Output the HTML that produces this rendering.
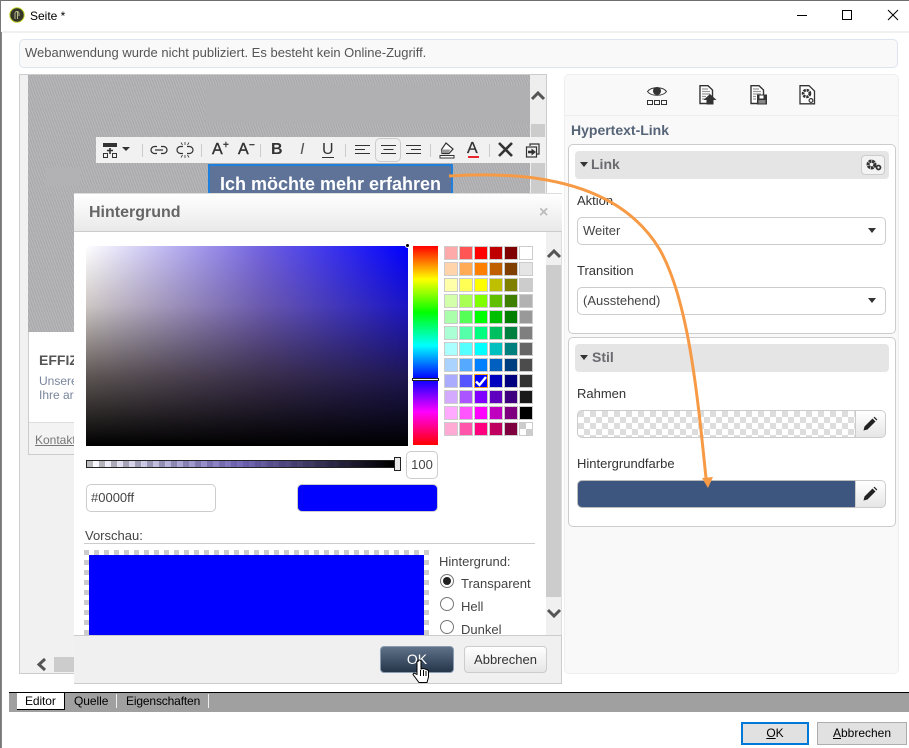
<!DOCTYPE html>
<html lang="de">
<head>
<meta charset="utf-8">
<title>Seite</title>
<style>
html,body{margin:0;padding:0;width:909px;height:748px;overflow:hidden;background:#fff}
body{position:relative;font-family:"Liberation Sans",Arial,sans-serif;font-size:13px;color:#444}
div,span,svg{position:absolute;box-sizing:border-box}
.t{white-space:nowrap;line-height:16px}
.sep{top:144px;width:1px;height:13px;background:#ccc}
.tb{font-weight:bold;color:#333;text-align:center;white-space:nowrap;line-height:18px}
.sel{left:577px;width:309px;height:28px;background:#fff;border:1px solid #ccc;border-radius:5px}
.car{width:0;height:0;border-left:4px solid transparent;border-right:4px solid transparent;border-top:5px solid #333}
.chk{background:repeating-conic-gradient(from 90deg,#ddd 0 25%,#fff 0 50%) 0 0/12px 12px}
.grp{left:568px;width:328px;background:#fff;border:1px solid #ccc;border-radius:5px}
.hd{left:575px;width:314px;height:28px;background:#e5e5e5;border-radius:4px}
.pb{left:855px;width:31px;height:28px;background:linear-gradient(#fff,#e6e6e6);border:1px solid #ccc;border-radius:0 5px 5px 0}
.sw{display:grid;grid-template-columns:repeat(6,14px);grid-auto-rows:14px;column-gap:1px;row-gap:2px;left:444px;top:246px}
.sw i{display:block;border:1px solid #ccc;position:relative;box-sizing:border-box}
.rd{width:14px;height:14px;border-radius:50%;border:1px solid #777;background:#fff;left:440px}
</style>
</head>
<body>
<!-- window chrome -->
<div style="left:0;top:0;width:909px;height:1px;background:#6e6e6e"></div>
<div style="left:0;top:0;width:1px;height:748px;background:#777"></div>
<div style="left:1px;top:32px;width:1px;height:716px;background:#888"></div>
<div style="left:2px;top:31px;width:907px;height:2px;background:#f0f0f0"></div>
<svg style="left:9px;top:7px" width="16" height="16" viewBox="0 0 16 16"><circle cx="8" cy="8" r="7.2" fill="#33352a" stroke="#c4d428" stroke-width="1"/><path d="M6 12V6.500a2 2 0 0 1 4 0V9M8.500 4v8" stroke="#b9b98a" stroke-width="1" fill="none"/></svg>
<div class="t" style="left:30px;top:8px;font-size:12px;color:#000">Seite *</div>
<svg style="left:790px;top:5px" width="115" height="20" viewBox="0 0 115 20"><path d="M7 10.500H17" stroke="#000" fill="none"/><rect x="52.500" y="5.500" width="9" height="9" stroke="#000" fill="none"/><path d="M98 5L108 15M108 5L98 15" stroke="#000" fill="none"/></svg>

<!-- notice -->
<div style="left:19px;top:39px;width:879px;height:29px;background:#f9f9f9;border:1px solid #dce4ef;border-radius:5px"></div>
<div class="t" style="left:25px;top:45px;font-size:13px;color:#555">Webanwendung wurde nicht publiziert. Es besteht kein Online-Zugriff.</div>

<!-- editor panel -->
<div style="left:19px;top:74px;width:528px;height:600px;background:#f1f1f1;border:1px solid #ccc"></div>
<div style="left:28px;top:75px;width:502px;height:257px;background-color:#aeaeb0;background-image:repeating-linear-gradient(70deg,#a8a8aa 0 1px,#b6b6b8 1px 2.500px)"></div>
<div style="left:205px;top:85px;width:325px;height:39px;background:#b0b0b2"></div>
<div style="left:45px;top:168px;width:35px;height:18px;background:#b2b2b4"></div>
<div style="left:530px;top:75px;width:16px;height:125px;background:#eee"></div>
<div style="left:531px;top:124px;width:14px;height:76px;background:#ccc"></div>
<svg style="left:530px;top:90px" width="16" height="12" viewBox="0 0 16 12"><path d="M2 9L8 3L14 9" stroke="#555" stroke-width="3" fill="none"/></svg>
<div style="left:29px;top:332px;width:46px;height:123px;background:#fff;border-bottom:1px solid #ccc"></div>
<div style="left:28px;top:332px;width:1px;height:123px;background:#ccc"></div>
<div style="left:29px;top:422px;width:46px;height:1px;background:#ddd"></div>
<div style="left:29px;top:423px;width:46px;height:31px;background:#f3f3f3"></div>
<div class="t" style="left:39px;top:352px;width:35px;overflow:hidden;font-weight:bold;font-size:14px;color:#555">EFFIZIENZ</div>
<div class="t" style="left:39px;top:373px;width:35px;overflow:hidden;font-size:12px;color:#78859c">Unsere</div>
<div class="t" style="left:39px;top:387px;width:35px;overflow:hidden;font-size:12px;color:#78859c">Ihre ar</div>
<div class="t" style="left:35px;top:432px;width:39px;overflow:hidden;font-size:12px;color:#777;text-decoration:underline">Kontakt</div>
<svg style="left:35px;top:657px" width="14" height="15" viewBox="0 0 14 15"><path d="M10 2L4 7.500L10 13" stroke="#555" stroke-width="3" fill="none"/></svg>
<div style="left:54px;top:657px;width:21px;height:15px;background:#ccc"></div>

<!-- button being edited -->
<div style="left:208px;top:164px;width:245px;height:32px;background:#5f7399;border:2px solid #1f80dc;border-bottom:0"></div>
<div class="t" style="left:208px;top:174px;width:245px;text-align:center;font-weight:bold;font-size:18px;color:#fff;line-height:20px">Ich möchte mehr erfahren</div>

<!-- toolbar -->
<div style="left:96px;top:137px;width:450px;height:26px;background:#f1f1f1"></div>
<svg style="left:102px;top:142px" width="32" height="18" viewBox="0 0 32 18"><rect x="1" y="1" width="14" height="4" fill="#333"/><path d="M8 6v6M5 8.500h6" stroke="#333" stroke-width="1.600"/><rect x="1.500" y="11.500" width="4" height="4" fill="none" stroke="#333"/><rect x="10.500" y="11.500" width="4" height="4" fill="none" stroke="#333"/><path d="M20 5h8l-4 4z" fill="#333"/></svg>
<div class="sep" style="left:142px"></div>
<svg style="left:150px;top:143px" width="18" height="14" viewBox="0 0 18 14"><path d="M7 3.500H4.500a3.500 3.500 0 0 0 0 7H7M11 3.500h2.500a3.500 3.500 0 0 1 0 7H11M5 7h8" fill="none" stroke="#333" stroke-width="1.300"/></svg>
<svg style="left:176px;top:141px" width="18" height="18" viewBox="0 0 18 18"><path d="M7 5.500H4.500a3.500 3.500 0 0 0 0 7H7M11 5.500h2.500a3.500 3.500 0 0 1 0 7H11" fill="none" stroke="#333" stroke-width="1.200"/><path d="M9 1v3M5 1.500l1.500 2.500M13 1.500L11.500 4M9 14v3M5 16.500l1.500-2.500M13 16.500L11.500 14" stroke="#333" stroke-width=".8"/></svg>
<div class="sep" style="left:201px"></div>
<div class="tb" style="left:212px;top:141px;font-size:16px;font-weight:normal;-webkit-text-stroke:.4px #333">A<span style="position:absolute;left:11px;top:-4px;font-size:10px">+</span></div>
<div class="tb" style="left:238px;top:141px;font-size:16px;font-weight:normal;-webkit-text-stroke:.4px #333">A<span style="position:absolute;left:11px;top:-4px;font-size:10px">−</span></div>
<div class="sep" style="left:260px"></div>
<div class="tb" style="left:271px;top:141px;font-size:16px">B</div>
<div class="tb" style="left:300px;top:141px;font-size:16px;font-weight:normal;font-style:italic;color:#555">I</div>
<div class="tb" style="left:322px;top:141px;font-size:16px;font-weight:normal">U</div>
<div style="left:322px;top:157px;width:12px;height:1px;background:#333"></div>
<div class="sep" style="left:345px"></div>
<div style="left:375px;top:138px;width:26px;height:24px;border:1px solid #ccc;border-radius:5px"></div>
<svg style="left:354px;top:143px" width="68" height="14" viewBox="0 0 68 14"><path d="M1 2.500h15M1 6.500h10M1 10.500h15M27 2.500h15M29.500 6.500h10M27 10.500h15M52 2.500h15M57 6.500h10M52 10.500h15" stroke="#333" stroke-width="1" fill="none"/></svg>
<div class="sep" style="left:430px"></div>
<svg style="left:439px;top:142px" width="16" height="17" viewBox="0 0 16 17"><path d="M7 1L14 7L10 11.500H3L2.500 7.500z" fill="#fff" stroke="#333" stroke-width="1.200"/><path d="M2.500 7.500h9L9.500 11H3z" fill="#999"/><path d="M1 13.500h14v2.500H1z" fill="#fff" stroke="#333" stroke-width="1"/></svg>
<div class="tb" style="left:467px;top:140px;font-size:16px;font-weight:normal;color:#333;-webkit-text-stroke:.3px #333">A</div>
<div style="left:468px;top:156px;width:11px;height:2px;background:#e8262c"></div>
<div class="sep" style="left:489px"></div>
<svg style="left:497px;top:141px" width="17" height="17" viewBox="0 0 17 17"><path d="M2 2L15 15M15 2L2 15" stroke="#333" stroke-width="2.600" fill="none"/></svg>
<svg style="left:525px;top:143px" width="16" height="15" viewBox="0 0 16 15"><path d="M5 3V1h9v10h-3" fill="none" stroke="#333" stroke-width="1.200"/><rect x="1.500" y="4" width="10" height="10" fill="#f1f1f1" stroke="#333" stroke-width="1.200"/><path d="M3 7.800h3.500V5.500L11 9l-4.500 3.500v-2.300H3z" fill="#333"/></svg>

<!-- right panel -->
<div style="left:564px;top:74px;width:335px;height:600px;background:#f9f9f9;border:1px solid #eee;border-radius:5px"></div>
<div style="left:565px;top:115px;width:333px;height:1px;background:#eee"></div>
<svg style="left:646px;top:84px" width="22" height="22" viewBox="0 0 22 22"><path d="M1.500 7.500C5 2.500 17 2.500 20.500 7.500C17 12.500 5 12.500 1.500 7.500Z" fill="none" stroke="#333"/><circle cx="11" cy="7" r="4" fill="#333"/><rect x="1.500" y="16.500" width="5" height="4" fill="none" stroke="#333"/><rect x="8.500" y="16.500" width="5" height="4" fill="none" stroke="#333"/><rect x="15.500" y="16.500" width="5" height="4" fill="none" stroke="#333"/></svg>
<svg style="left:699px;top:85px" width="18" height="21" viewBox="0 0 18 21"><path d="M1 .700H9L13.500 5V18.500H1Z" fill="#fff" stroke="#333" stroke-width="1.400"/><path d="M3 4h6M3 6.500h8M3 9h8M3 11.500h4M3 14h3" stroke="#999" stroke-width="1.300"/><path d="M11 9l6.500 6H14.500v4.500H7.500V15H4.500z" fill="#333"/></svg>
<svg style="left:750px;top:85px" width="18" height="21" viewBox="0 0 18 21"><path d="M1 .700H9L13.500 5V18.500H1Z" fill="#fff" stroke="#333" stroke-width="1.400"/><path d="M3 4h6M3 6.500h8M3 9h8M3 11.500h3M3 14h3" stroke="#999" stroke-width="1.300"/><path d="M7 9.500h10v10H7z" fill="#333"/><rect x="9.500" y="10.500" width="4" height="3" fill="#fff"/><rect x="8.500" y="15" width="7" height="3.500" fill="#888"/></svg>
<svg style="left:799px;top:85px" width="17" height="20" viewBox="0 0 17 20"><path d="M1 .700H10L15.500 6V18.800H1Z" fill="#fff" stroke="#333" stroke-width="1.300"/><circle cx="7.500" cy="8.500" r="3.400" fill="none" stroke="#333" stroke-width="2.800" stroke-dasharray="2.400 .8"/><circle cx="12" cy="15.500" r="1.900" fill="#fff" stroke="#333" stroke-width="1.200"/></svg>
<div class="t" style="left:571px;top:122px;font-weight:bold;font-size:14px;color:#566478">Hypertext-Link</div>

<div class="grp" style="top:144px;height:190px"></div>
<div class="hd" style="top:151px"></div>
<div class="car" style="left:580px;top:162px"></div>
<div class="t" style="left:591px;top:156px;font-weight:bold;font-size:14px;color:#6a6a70">Link</div>
<div style="left:861px;top:155px;width:24px;height:20px;background:#f3f3f3;border:1px solid #ccc;border-radius:4px"></div>
<svg style="left:865px;top:158px" width="17" height="14" viewBox="0 0 17 14"><circle cx="6.500" cy="6.500" r="3.400" fill="none" stroke="#333" stroke-width="3.200" stroke-dasharray="2.700 .6"/><circle cx="13.500" cy="9.500" r="2" fill="none" stroke="#333" stroke-width="1.700"/></svg>
<div class="t" style="left:577px;top:193px;color:#333">Aktion</div>
<div class="sel" style="top:217px"></div>
<div class="t" style="left:583px;top:223px;color:#444">Weiter</div>
<div class="car" style="left:868px;top:228px"></div>
<div class="t" style="left:577px;top:263px;color:#333">Transition</div>
<div class="sel" style="top:287px"></div>
<div class="t" style="left:583px;top:293px;color:#444">(Ausstehend)</div>
<div class="car" style="left:868px;top:298px"></div>

<div class="grp" style="top:337px;height:190px"></div>
<div class="hd" style="top:344px"></div>
<div class="car" style="left:580px;top:355px"></div>
<div class="t" style="left:592px;top:349px;font-weight:bold;font-size:14px;color:#6a6a70">Stil</div>
<div class="t" style="left:577px;top:386px;color:#333">Rahmen</div>
<div class="chk" style="left:577px;top:410px;width:279px;height:28px;border:1px solid #ccc;border-radius:5px 0 0 5px"></div>
<div class="pb" style="top:410px"></div>
<svg style="left:862px;top:416px" width="16" height="16" viewBox="0 0 16 16"><path d="M1.500 14.500L2.500 10.500L10.500 2.500L13.500 5.500L5.500 13.500Z" fill="#222"/><path d="M11.500 1.500L12.500.7L15.300 3.500L14.500 4.500Z" fill="#222"/></svg>
<div class="t" style="left:577px;top:456px;color:#333">Hintergrundfarbe</div>
<div style="left:577px;top:480px;width:279px;height:28px;background:#3d5680;border:1px solid #bbb;border-radius:5px 0 0 5px"></div>
<div class="pb" style="top:480px"></div>
<svg style="left:862px;top:486px" width="16" height="16" viewBox="0 0 16 16"><path d="M1.500 14.500L2.500 10.500L10.500 2.500L13.500 5.500L5.500 13.500Z" fill="#222"/><path d="M11.500 1.500L12.500.7L15.300 3.500L14.500 4.500Z" fill="#222"/></svg>

<!-- tab bar -->
<div style="left:9px;top:692px;width:900px;height:20px;background:#a0a0a0;border-top:1px solid #000"></div>
<div style="left:17px;top:693px;width:48px;height:17px;background:#fff;border-right:1px solid #000;border-bottom:1px solid #000"></div>
<div class="t" style="left:25px;top:693px;font-size:12px;color:#000;letter-spacing:-.1px">Editor</div>
<div class="t" style="left:74px;top:693px;font-size:12px;color:#000;letter-spacing:-.05px">Quelle</div>
<div style="left:116px;top:694px;width:1px;height:14px;background:#eee"></div>
<div class="t" style="left:126px;top:693px;font-size:12px;color:#000;letter-spacing:-.15px">Eigenschaften</div>
<div style="left:208px;top:694px;width:1px;height:14px;background:#eee"></div>

<!-- bottom buttons -->
<div class="t" style="left:741px;top:722px;width:68px;height:23px;background:#e1e1e1;border:2px solid #0078d7;text-align:center;font-size:12px;color:#000;line-height:19px"><u>O</u>K</div>
<div class="t" style="left:817px;top:722px;width:90px;height:23px;background:#e1e1e1;border:1px solid #adadad;text-align:center;font-size:12px;color:#000;line-height:21px"><u>A</u>bbrechen</div>

<!-- dialog -->
<div style="left:74px;top:193px;width:488px;height:490px;background:#fff;border-top:1px solid #ddd"></div>
<div style="left:74px;top:194px;width:488px;height:38px;background:linear-gradient(#fff,#e9e9e9);border-bottom:1px solid #ccc"></div>
<div class="t" style="left:89px;top:205px;font-weight:bold;font-size:16px;color:#666">Hintergrund</div>
<div class="t" style="left:539px;top:205px;font-weight:bold;font-size:16px;color:#bbb">×</div>

<div style="left:86px;top:246px;width:322px;height:200px;background:linear-gradient(to top,#000,rgba(40,30,26,.75) 35%,rgba(90,70,60,.3) 70%,rgba(0,0,0,0)),linear-gradient(to right,#fff,#7060e0 55%,#00f)"></div>
<div style="left:405px;top:243px;width:5px;height:5px;background:#000;border-radius:50%;border:1px solid #fff"></div>
<div style="left:413px;top:246px;width:25px;height:199px;background:linear-gradient(#f00,#ff0 16.670%,#0f0 33.330%,#0ff 50%,#00f 66.670%,#f0f 83.330%,#f00)"></div>
<div style="left:412px;top:378px;width:27px;height:3px;background:#fff;border:1px solid #222"></div>

<div class="sw">
<i style="background:#faa"></i><i style="background:#f55"></i><i style="background:#f00"></i><i style="background:#bf0000"></i><i style="background:#7f0000"></i><i style="background:#fff"></i>
<i style="background:#ffd4aa"></i><i style="background:#fa5"></i><i style="background:#ff7f00"></i><i style="background:#bf5f00"></i><i style="background:#7f3f00"></i><i style="background:#e5e5e5"></i>
<i style="background:#ffa"></i><i style="background:#ff5"></i><i style="background:#ff0"></i><i style="background:#bfbf00"></i><i style="background:#7f7f00"></i><i style="background:#ccc"></i>
<i style="background:#d4ffaa"></i><i style="background:#af5"></i><i style="background:#7fff00"></i><i style="background:#5fbf00"></i><i style="background:#3f7f00"></i><i style="background:#b2b2b2"></i>
<i style="background:#afa"></i><i style="background:#5f5"></i><i style="background:#0f0"></i><i style="background:#00bf00"></i><i style="background:#007f00"></i><i style="background:#999"></i>
<i style="background:#aaffd4"></i><i style="background:#5fa"></i><i style="background:#00ff7f"></i><i style="background:#00bf5f"></i><i style="background:#007f3f"></i><i style="background:#7f7f7f"></i>
<i style="background:#aff"></i><i style="background:#5ff"></i><i style="background:#0ff"></i><i style="background:#00bfbf"></i><i style="background:#007f7f"></i><i style="background:#666"></i>
<i style="background:#aad4ff"></i><i style="background:#5af"></i><i style="background:#007fff"></i><i style="background:#005fbf"></i><i style="background:#003f7f"></i><i style="background:#4c4c4c"></i>
<i style="background:#aaf"></i><i style="background:#55f"></i><i style="background:#00f;border-color:#f5a623"></i><i style="background:#0000bf"></i><i style="background:#00007f"></i><i style="background:#333"></i>
<i style="background:#d4aaff"></i><i style="background:#a5f"></i><i style="background:#7f00ff"></i><i style="background:#5f00bf"></i><i style="background:#3f007f"></i><i style="background:#191919"></i>
<i style="background:#faf"></i><i style="background:#f5f"></i><i style="background:#f0f"></i><i style="background:#bf00bf"></i><i style="background:#7f007f"></i><i style="background:#000"></i>
<i style="background:#ffaad4"></i><i style="background:#f5a"></i><i style="background:#ff007f"></i><i style="background:#bf005f"></i><i style="background:#7f003f"></i><i style="background:linear-gradient(#ccc,#ccc) 0 0/6px 6px no-repeat,linear-gradient(#ccc,#ccc) 6px 6px/6px 6px no-repeat,#fff"></i>
</div>
<svg style="left:474px;top:374px" width="14" height="14" viewBox="0 0 14 14"><path d="M2 7.500L5.500 11L12 3" stroke="#fff" stroke-width="2.400" fill="none"/></svg>

<div style="left:86px;top:460px;width:312px;height:8px;border:1px solid #222;background:linear-gradient(to right,rgba(120,110,220,0),rgba(90,80,170,.85) 50%,#000 98%),repeating-conic-gradient(from 270deg,#bbb 0 25%,#fff 0 50%) 0 0/12px 12px"></div>
<div style="left:394px;top:457px;width:7px;height:14px;background:#e8e8e8;border:1px solid #222"></div>
<div class="t" style="left:406px;top:451px;width:32px;height:28px;border:1px solid #ccc;border-radius:5px;text-align:center;line-height:26px;font-size:13px;color:#444">100</div>
<div style="left:86px;top:484px;width:130px;height:28px;border:1px solid #ccc;border-radius:5px"></div>
<div class="t" style="left:91px;top:490px;font-size:13px;color:#444">#0000ff</div>
<div style="left:297px;top:484px;width:141px;height:28px;background:#00f;border:1px solid #ccc;border-radius:5px"></div>

<div class="t" style="left:85px;top:528px;font-size:13px;color:#444">Vorschau:</div>
<div style="left:84px;top:543px;width:451px;height:1px;background:#ccc"></div>
<div style="left:84px;top:550px;width:345px;height:85px;background:repeating-conic-gradient(from 270deg,#ccc 0 25%,#fff 0 50%) 0 0/10px 10px"></div>
<div style="left:89px;top:555px;width:335px;height:80px;background:#00f"></div>

<div class="t" style="left:439px;top:554px;font-size:13px;color:#444">Hintergrund:</div>
<div class="rd" style="top:574px"></div><div style="left:443px;top:577px;width:8px;height:8px;border-radius:50%;background:#222"></div>
<div class="t" style="left:461px;top:576px;font-size:13px;color:#444">Transparent</div>
<div class="rd" style="top:597px"></div>
<div class="t" style="left:461px;top:599px;font-size:13px;color:#444">Hell</div>
<div class="rd" style="top:620px"></div>
<div class="t" style="left:461px;top:622px;font-size:13px;color:#444;height:13px;overflow:hidden">Dunkel</div>

<div style="left:546px;top:232px;width:16px;height:403px;background:#f0f0f0;border-right:1px solid #ddd"></div>
<div style="left:546px;top:265px;width:15px;height:332px;background:#ccc"></div>
<svg style="left:546px;top:248px" width="16" height="12" viewBox="0 0 16 12"><path d="M2 9L8 3L14 9" stroke="#555" stroke-width="3" fill="none"/></svg>
<svg style="left:546px;top:607px" width="16" height="12" viewBox="0 0 16 12"><path d="M2 3L8 9L14 3" stroke="#555" stroke-width="3" fill="none"/></svg>

<div style="left:74px;top:635px;width:488px;height:49px;background:#f0f0f0;border-top:1px solid #ccc;border-bottom:1px solid #ccc;border-right:1px solid #ccc"></div>
<div class="t" style="left:380px;top:646px;width:74px;height:27px;background:linear-gradient(#5f7289,#25354a);border:1px solid #8a9bb0;border-radius:4px;text-align:center;color:#fff;line-height:25px;font-size:14px">OK</div>
<div class="t" style="left:464px;top:646px;width:83px;height:27px;background:linear-gradient(#fff,#e6e6e6);border:1px solid #ccc;border-radius:4px;text-align:center;color:#333;line-height:25px;font-size:13px">Abbrechen</div>
<svg style="left:412px;top:659px" width="20" height="26" viewBox="0 0 20 26"><path d="M6 2.500a1.500 1.500 0 0 1 3 0V10l1.500-.5 2 .3 2 .7 2 1V18l-1.500 5.500H7L1 15.500l1-1.500 3 1.500V2.500z" fill="#fff" stroke="#000" stroke-width="1"/><path d="M8.500 11v6M11.500 11v6M14 12v5" stroke="#000" stroke-width="1"/></svg>

<!-- orange arrow -->
<svg style="left:0;top:0" width="909" height="748" viewBox="0 0 909 748"><path d="M449 176C540 170 622 186 660 250C688 300 697 390 706 478" fill="none" stroke="#f79a45" stroke-width="3"/><path d="M702 478L713 477L708 488Z" fill="#f79a45"/></svg>
</body>
</html>
